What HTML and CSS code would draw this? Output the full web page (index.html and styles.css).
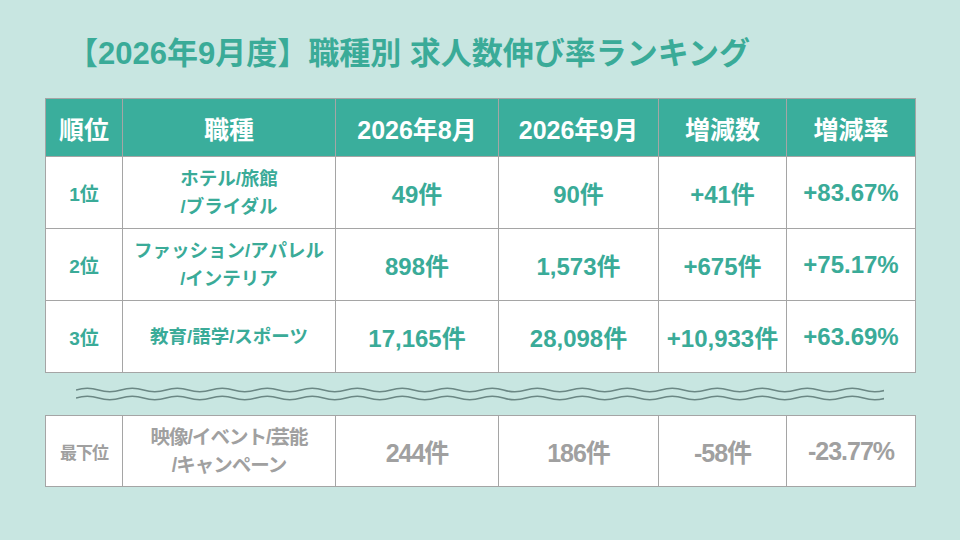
FILE: index.html
```html
<!DOCTYPE html>
<html lang="ja">
<head>
<meta charset="utf-8">
<link rel="stylesheet" href="styles.css">
</head>
<body>
<main class="page">
  <h1 class="title">【2026年9月度】職種別 求人数伸び率ランキング</h1>
  <table class="rank">
    <colgroup>
      <col class="c1"><col class="c2"><col class="c3"><col class="c4"><col class="c5"><col class="c6">
    </colgroup>
    <thead>
      <tr><th>順位</th><th>職種</th><th>2026年8月</th><th>2026年9月</th><th>増減数</th><th>増減率</th></tr>
    </thead>
    <tbody>
      <tr><td class="pos">1位</td><td class="job">ホテル/旅館<br>/ブライダル</td><td class="num">49件</td><td class="num">90件</td><td class="num">+41件</td><td class="num">+83.67%</td></tr>
      <tr><td class="pos">2位</td><td class="job">ファッション/アパレル<br>/インテリア</td><td class="num">898件</td><td class="num">1,573件</td><td class="num">+675件</td><td class="num">+75.17%</td></tr>
      <tr><td class="pos">3位</td><td class="job">教育/語学/スポーツ</td><td class="num">17,165件</td><td class="num">28,098件</td><td class="num">+10,933件</td><td class="num">+63.69%</td></tr>
    </tbody>
  </table>
  <div class="wave">
    <svg width="808" height="16" viewBox="0 0 808 16">
      <path d="M0 4 q11.25 -3.5 22.5 0 t22.5 0 t22.5 0 t22.5 0 t22.5 0 t22.5 0 t22.5 0 t22.5 0 t22.5 0 t22.5 0 t22.5 0 t22.5 0 t22.5 0 t22.5 0 t22.5 0 t22.5 0 t22.5 0 t22.5 0 t22.5 0 t22.5 0 t22.5 0 t22.5 0 t22.5 0 t22.5 0 t22.5 0 t22.5 0 t22.5 0 t22.5 0 t22.5 0 t22.5 0 t22.5 0 t22.5 0 t22.5 0 t22.5 0 t22.5 0 t22.5 0" fill="none" stroke="#6b8784" stroke-width="1.6"/>
      <path d="M0 12 q11.25 -3.5 22.5 0 t22.5 0 t22.5 0 t22.5 0 t22.5 0 t22.5 0 t22.5 0 t22.5 0 t22.5 0 t22.5 0 t22.5 0 t22.5 0 t22.5 0 t22.5 0 t22.5 0 t22.5 0 t22.5 0 t22.5 0 t22.5 0 t22.5 0 t22.5 0 t22.5 0 t22.5 0 t22.5 0 t22.5 0 t22.5 0 t22.5 0 t22.5 0 t22.5 0 t22.5 0 t22.5 0 t22.5 0 t22.5 0 t22.5 0 t22.5 0 t22.5 0" fill="none" stroke="#6b8784" stroke-width="1.6"/>
    </svg>
  </div>
  <table class="rank last">
    <colgroup>
      <col class="c1"><col class="c2"><col class="c3"><col class="c4"><col class="c5"><col class="c6">
    </colgroup>
    <tbody>
      <tr><td class="pos small">最下位</td><td class="job">映像/イベント/芸能<br>/キャンペーン</td><td class="num">244件</td><td class="num">186件</td><td class="num">-58件</td><td class="num">-23.77%</td></tr>
    </tbody>
  </table>
</main>
</body>
</html>
```

FILE: styles.css
```css
html, body {
  margin: 0;
  padding: 0;
}
body {
  background: #c8e6e1;
  font-family: "Liberation Sans", "Noto Sans CJK JP", sans-serif;
  width: 960px;
  height: 540px;
  overflow: hidden;
}
.page {
  padding: 32px 0 0 45px;
}
.title {
  margin: 0 0 0 22px;
  height: 66px;
  font-size: 31px;
  line-height: 44px;
  font-weight: 700;
  color: #3aab98;
  letter-spacing: 0;
}
.rank {
  border-collapse: collapse;
  table-layout: fixed;
  width: 870px;
  background: #ffffff;
}
.c1 { width: 77px; }
.c2 { width: 213px; }
.c3 { width: 163px; }
.c4 { width: 160px; }
.c5 { width: 128px; }
.c6 { width: 129px; }
.rank th, .rank td {
  border: 1px solid #a5a5a5;
  text-align: center;
  vertical-align: middle;
  padding: 0;
  font-weight: 700;
  white-space: nowrap;
}
.rank th {
  background: #3aae9c;
  color: #ffffff;
  height: 57px;
  font-size: 25px;
}
.rank td {
  height: 71px;
  color: #3aab98;
}
.rank .pos {
  font-size: 19px;
}
.rank .job {
  font-size: 18.5px;
  line-height: 28px;
}
.rank .num {
  font-size: 24px;
}
.wave {
  height: 42px;
  padding: 13px 0 0 31px;
  box-sizing: border-box;
}
.wave svg {
  display: block;
}
.last td {
  color: #a0a0a0;
  height: 70px;
}
.last .small {
  font-size: 17px;
  letter-spacing: -1px;
}
.last .job {
  font-size: 19.5px;
  letter-spacing: -1px;
}
.last .num {
  font-size: 25px;
  letter-spacing: -1px;
}
```
